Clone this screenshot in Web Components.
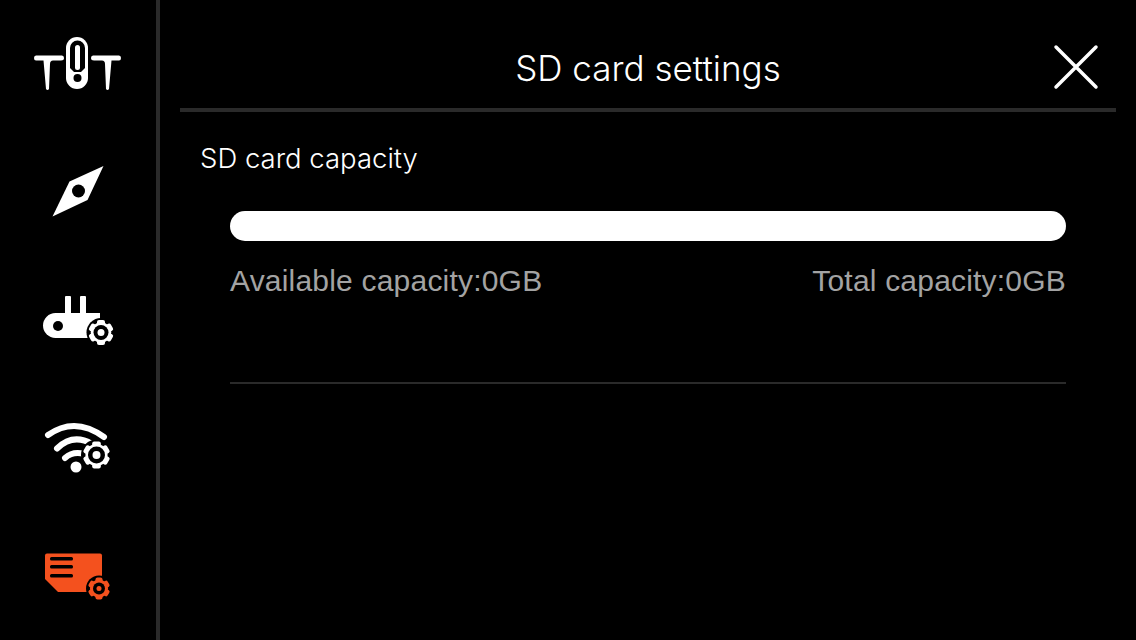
<!DOCTYPE html>
<html>
<head>
<meta charset="utf-8">
<title>SD card settings</title>
<style>
    html, body { margin: 0; height: 100%; background: #000; }
    body { font-family: Inter, "Liberation Sans", Arial, sans-serif; color: #fff; }
</style>
</head>
<body>
<settings-screen>
    <side-nav slot="nav">
        <nav-icon name="drone"></nav-icon>
        <nav-icon name="compass"></nav-icon>
        <nav-icon name="remote"></nav-icon>
        <nav-icon name="wifi"></nav-icon>
        <nav-icon name="card"></nav-icon>
    </side-nav>
    <page-header>SD card settings</page-header>
    <capacity-panel label="SD card capacity" available="Available capacity:0GB" total="Total capacity:0GB"></capacity-panel>
</settings-screen>

<script>
// gear drawn at page coords, halo is the black cut around it
function gear(cx, cy, r, color, hole, dot) {
    let teeth = '';
    for (let i = 0; i < 6; i++) {
        teeth += `<rect x="${cx - r * 0.32}" y="${cy - r}" width="${r * 0.64}" height="${r * 0.5}" rx="2" fill="${color}" transform="rotate(${i * 60} ${cx} ${cy})"/>`;
    }
    return `<circle cx="${cx}" cy="${cy}" r="${r + 2}" fill="#000"/>
        ${teeth}
        <circle cx="${cx}" cy="${cy}" r="${r * 0.82}" fill="${color}"/>
        <circle cx="${cx}" cy="${cy}" r="${hole}" fill="#000"/>
        ${dot ? `<circle cx="${cx}" cy="${cy}" r="${dot}" fill="${color}"/>` : ''}`;
}

// every icon uses page coords, viewBox picks the row
const ICONS = {
    drone: { row: 0, body: `
        <path fill="#fff" d="M66 48a11 11 0 0 1 22 0V78a11 11 0 0 1-22 0Z"/>
        <path fill="#000" d="M70 48a7.500 7.500 0 0 1 15 0V68L81 72H74L70 68Z"/>
        <rect x="75" y="45" width="5" height="25" rx="2.500" fill="#fff"/>
        <circle cx="77.500" cy="78" r="4" fill="#000"/>
        <path fill="#fff" d="M36 55.500H62Q64 55.500 64 58T61 60.500H53Q50 60.500 50 64L49 89Q47.500 91 46 89L43.500 60.500H36Q34 60.500 34 58T36 55.500Z"/>
        <path fill="#fff" d="M119 55.500H93Q91 55.500 91 58T94 60.500H102Q105 60.500 105 64L106 89Q107.500 91 109 89L111.500 60.500H119Q121 60.500 121 58T119 55.500Z"/>` },
    compass: { row: 1, body: `
        <path fill="#fff" d="M103.500 166 69.500 181.500 52.500 216.500 87.500 200Z"/>
        <circle cx="78.500" cy="191" r="6.500" fill="#000"/>` },
    remote: { row: 2, body: `
        <rect x="65" y="296" width="6" height="20" rx="1" fill="#fff"/>
        <rect x="80" y="296" width="6" height="20" rx="1" fill="#fff"/>
        <path fill="#fff" d="M55.500 313H100V338H55.500a12.500 12.500 0 0 1 0-25Z"/>
        <circle cx="58" cy="326" r="5" fill="#000"/>
        ${gear(101, 332.500, 12.500, '#fff', 7.500, 3.500)}` },
    wifi: { row: 3, body: `
        <g fill="none" stroke="#fff" stroke-width="6" stroke-linecap="round">
            <path d="M48 435Q75 416 104 437"/>
            <path d="M57 448.500Q73 433 92 444"/>
            <path d="M65 458Q73 451 84 454"/>
        </g>
        <circle cx="76" cy="467" r="5.500" fill="#fff"/>
        ${gear(96.500, 455, 13.500, '#fff', 8.500, 4)}` },
    card: { row: 4, body: `
        <path fill="#f4511e" d="M47 553.500H100a2 2 0 0 1 2 2V592H58L45 579V555.500a2 2 0 0 1 2-2Z"/>
        <g fill="#000">
            <rect x="50" y="557" width="23" height="3.500" rx="1.500"/>
            <rect x="50" y="565" width="23" height="3.500" rx="1.500"/>
            <rect x="50" y="574" width="23" height="3.500" rx="1.500"/>
        </g>
        ${gear(99, 588.500, 11, '#f4511e', 6, 2.500)}` }
};

class SettingsScreen extends HTMLElement {
    constructor() {
        super();
        this.attachShadow({ mode: 'open' });
        this.shadowRoot.innerHTML = `
            <style>
                :host { display: flex; width: 1136px; height: 640px; background: #000; overflow: hidden; }
                main { flex: 1; min-width: 0; padding: 0 20px; display: flex; flex-direction: column; }
            </style>
            <slot name="nav"></slot>
            <main><slot></slot></main>
        `;
    }
}

class SideNav extends HTMLElement {
    constructor() {
        super();
        this.attachShadow({ mode: 'open' });
        this.shadowRoot.innerHTML = `
            <style>
                :host { display: flex; flex-direction: column; flex: none; width: 156px; height: 640px; border-right: 4px solid #2a2a2a; }
            </style>
            <slot></slot>
        `;
    }
}

class NavIcon extends HTMLElement {
    constructor() {
        super();
        this.attachShadow({ mode: 'open' });
    }

    connectedCallback() {
        const icon = ICONS[this.getAttribute('name')];
        this.shadowRoot.innerHTML = `
            <style>
                :host { display: block; flex: none; width: 156px; height: 128px; }
                svg { display: block; }
            </style>
            <svg width="156" height="128" viewBox="0 ${icon.row * 128} 156 128">${icon.body}</svg>
        `;
    }
}

class PageHeader extends HTMLElement {
    constructor() {
        super();
        this.attachShadow({ mode: 'open' });
        this.shadowRoot.innerHTML = `
            <style>
                :host { display: flex; flex: none; height: 80px; padding-top: 28px; border-bottom: 4px solid #2a2a2a; align-items: center; justify-content: center; position: relative; }
                h1 { margin: 0; font-size: 35px; font-weight: 300; color: #fff; }
                button { position: absolute; top: 44px; right: 17px; width: 46px; height: 46px; padding: 0; border: 0; background: none; }
                svg { display: block; }
            </style>
            <h1><slot></slot></h1>
            <button aria-label="Close">
                <svg width="46" height="46" viewBox="0 0 46 46" fill="none" stroke="#fff" stroke-width="3.500" stroke-linecap="round">
                    <path d="M3 3 43 43M43 3 3 43"/>
                </svg>
            </button>
        `;
    }
}

class CapacityPanel extends HTMLElement {
    constructor() {
        super();
        this.attachShadow({ mode: 'open' });
    }

    connectedCallback() {
        this.shadowRoot.innerHTML = `
            <style>
                :host { display: block; }
                h2 { margin: 0; padding: 30px 0 0 20px; font-size: 27.500px; line-height: 32px; font-weight: 300; color: #fff; }
                .wrap { margin: 37px 50px 0; }
                .bar { height: 30px; border-radius: 15px; background: #fff; }
                .caps { display: flex; justify-content: space-between; margin-top: 22px; font-family: "Liberation Sans", Arial, sans-serif; font-size: 30px; line-height: 36px; letter-spacing: 0.2px; color: #a3a3a3; }
                hr { margin: 83px 0 0; border: 0; height: 2px; background: #2a2a2a; }
            </style>
            <h2>${this.getAttribute('label')}</h2>
            <div class="wrap">
                <div class="bar"></div>
                <div class="caps">
                    <span>${this.getAttribute('available')}</span>
                    <span>${this.getAttribute('total')}</span>
                </div>
                <hr>
            </div>
        `;
    }
}

customElements.define('settings-screen', SettingsScreen);
customElements.define('side-nav', SideNav);
customElements.define('nav-icon', NavIcon);
customElements.define('page-header', PageHeader);
customElements.define('capacity-panel', CapacityPanel);
</script>
</body>
</html>
